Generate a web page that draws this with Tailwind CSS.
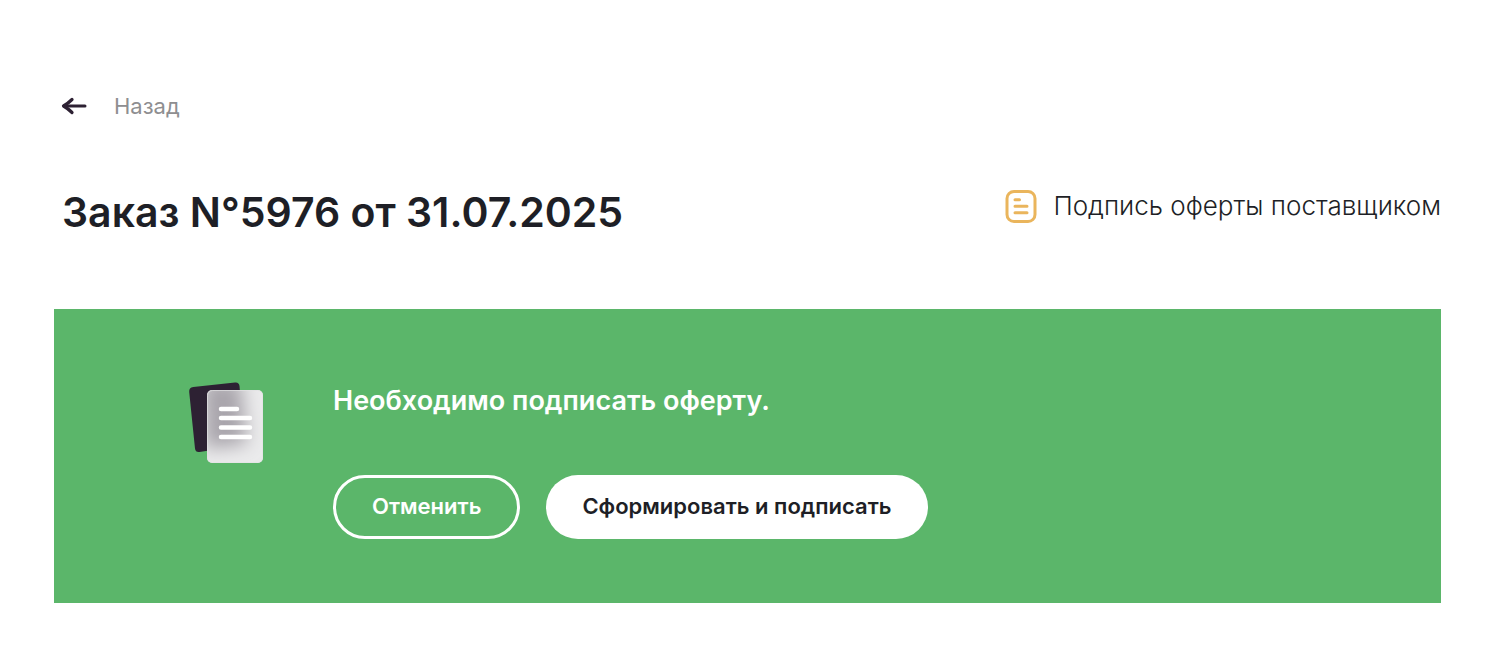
<!DOCTYPE html>
<html lang="ru">
<head>
  <meta charset="UTF-8">
  <meta name="viewport" content="width=device-width, initial-scale=1.0">
  <title>Заказ N°5976</title>
  <script src="https://cdn.jsdelivr.net/npm/@tailwindcss/browser@4"></script>
</head>
<body class="bg-white text-[#1e1f26] font-['Inter','Noto_Sans',sans-serif]">
  <main class="pl-[54px] pr-[71px] pt-[88px] pb-14">
    <a href="#" class="inline-flex items-center gap-6 pl-[6px] text-[22px] leading-9 text-[#8e8e90]">
      <svg class="w-[30px] h-6" viewBox="0 0 30 24" fill="none" stroke="#2d2133" stroke-width="3" stroke-linecap="round" stroke-linejoin="round">
        <path d="M25 12H4"/>
        <path d="M12 5.500C9.500 8 7 10 3.500 12c3.500 2 6 4 8.500 6.500" stroke-width="3.200"/>
      </svg>
      Назад
    </a>

    <div class="flex items-start justify-between mt-16 pl-2">
      <h1 class="text-[41px] leading-12 font-semibold">Заказ N°5976 от 31.07.2025</h1>
      <div class="flex items-center gap-4 text-[26px] leading-9 font-[350]">
        <svg class="w-8 h-[34px]" viewBox="0 0 32 34" fill="none" stroke="#eab55c" stroke-width="3" stroke-linecap="round">
          <rect x="2" y="2.500" width="28" height="30" rx="7"/>
          <path d="M10 10.700h4.500M10 17.300h12M10 23.700h12"/>
        </svg>
        <span>Подпись оферты поставщиком</span>
      </div>
    </div>

    <section class="flex items-start mt-[73px] pt-[70px] pb-16 pl-[132px] pr-8 bg-[#5bb66a]">
      <svg class="w-20 h-[88px] shrink-0" viewBox="0 0 80 88" fill="none">
        <defs>
          <clipPath id="sheet"><rect x="21" y="11" width="56" height="73" rx="5"/></clipPath>
          <filter id="frost" x="-50%" y="-50%" width="200%" height="200%"><feGaussianBlur stdDeviation="9"/></filter>
        </defs>
        <path d="M7.300 8 49 3.500q4-.5 4.500 3.500l5 59-45 7q-4 .5-4.500-3.500L3.200 13q-.4-4.500 4.100-5Z" fill="#2d2133"/>
        <g clip-path="url(#sheet)">
          <rect x="21" y="11" width="56" height="73" fill="#ebebec"/>
          <path d="M16 2h39l6 63-42 5Z" fill="#a9a5ac" filter="url(#frost)"/>
        </g>
        <rect x="21.500" y="11.500" width="55" height="72" rx="5" stroke="#e3e2e4" stroke-opacity=".7"/>
        <path d="M35 30h16M35 39h29M35 48.500h29M35 58h29" stroke="#fff" stroke-width="4.500" stroke-linecap="round"/>
      </svg>
      <div class="ml-[67px]">
        <h2 class="mt-1 text-[27px] leading-9 font-semibold text-white">Необходимо подписать оферту.</h2>
        <div class="flex flex-wrap gap-[26px] mt-14">
          <button type="button" class="h-16 px-9 pb-0.5 rounded-full border-3 border-white text-[22px] font-semibold text-white">Отменить</button>
          <button type="button" class="h-16 px-9 pb-0.5 rounded-full bg-white text-[22px] font-semibold">Сформировать и подписать</button>
        </div>
      </div>
    </section>
  </main>
</body>
</html>
